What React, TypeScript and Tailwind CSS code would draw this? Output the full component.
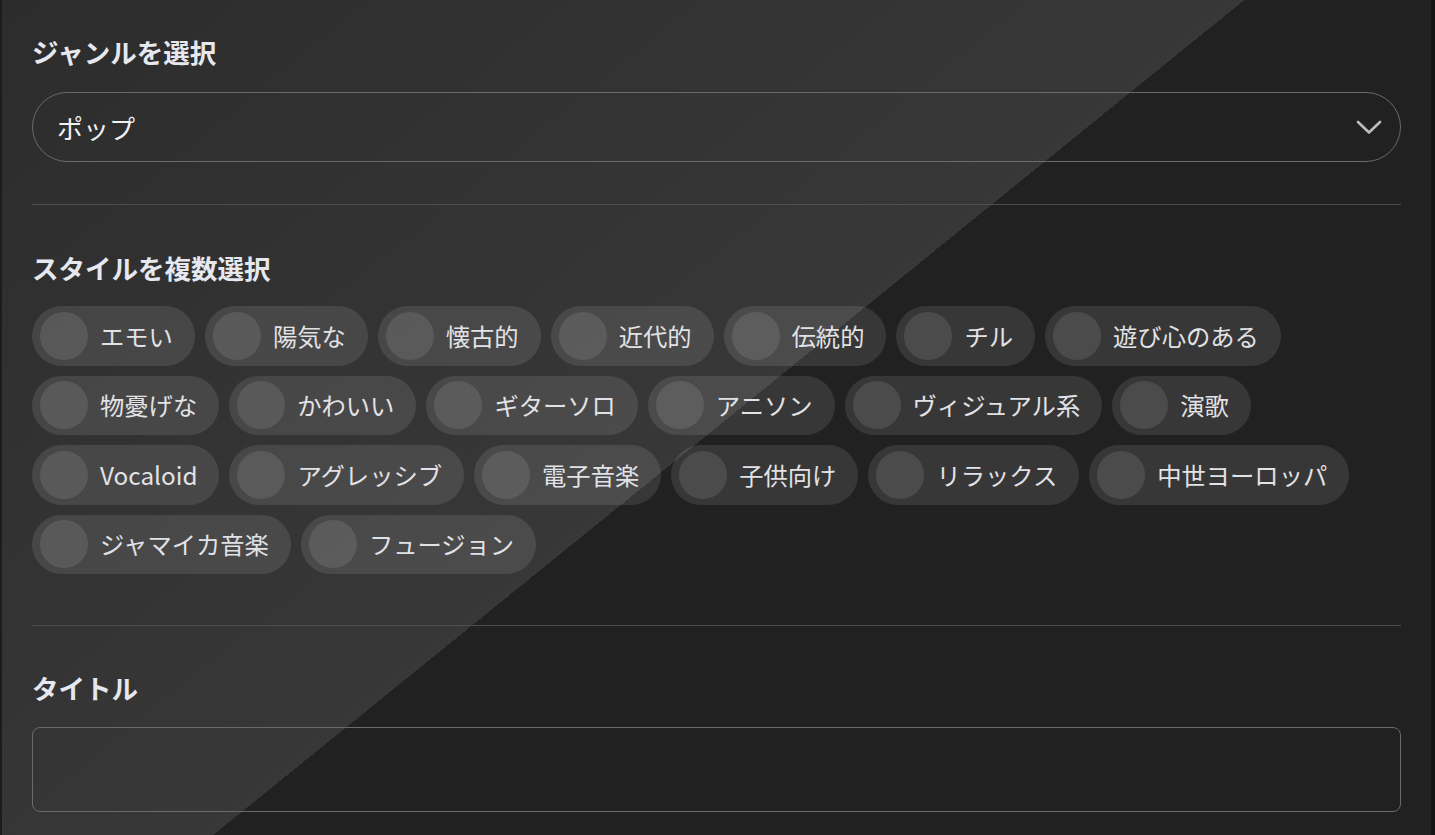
const styles = [
  ["エモい", "陽気な", "懐古的", "近代的", "伝統的", "チル", "遊び心のある"],
  ["物憂げな", "かわいい", "ギターソロ", "アニソン", "ヴィジュアル系", "演歌"],
  ["Vocaloid", "アグレッシブ", "電子音楽", "子供向け", "リラックス", "中世ヨーロッパ"],
  ["ジャマイカ音楽", "フュージョン"],
];

const SectionTitle = ({ children, className = "" }: { children: React.ReactNode; className?: string }) => (
  <h2 className={`text-[26.5px] leading-[40px] font-bold text-[#e6e8ef] ${className}`}>{children}</h2>
);

const StyleChip = ({ label }: { label: string }) => (
  <button className="flex items-center gap-3 h-[59.5px] pl-2 pr-[22px] rounded-full bg-white/10">
    <span className="w-12 h-12 rounded-full bg-white/10 shrink-0" />
    <span className="text-[24.3px] text-[#e2e2e6] whitespace-nowrap">{label}</span>
  </button>
);

export default function App() {
  return (
    <div
      className="h-[835px] w-full overflow-hidden flex bg-[#212121]"
      style={{ fontFamily: '"Noto Sans CJK JP", "Noto Sans", sans-serif' }}
    >
      <div className="w-[2px] shrink-0 bg-[#1b1d1b]" />
      <div className="flex-1 px-[30px] pt-8 bg-[linear-gradient(141deg,rgba(255,255,255,0.05)_0%,rgba(255,255,255,0.1)_50.5%,rgba(255,255,255,0)_50.5%)]">
        <SectionTitle className="mb-5">ジャンルを選択</SectionTitle>
        <div className="h-[70px] rounded-full border border-[#6a6a6a] flex items-center justify-between pl-6 pr-[18px]">
          <span className="text-[26px] text-[#f2f2f5]">ポップ</span>
          <svg width="26" height="15" viewBox="0 0 26 15" fill="none">
            <polyline points="2,2 13,12.5 24,2" stroke="#bdbdbd" strokeWidth="2.6" strokeLinecap="round" strokeLinejoin="round" />
          </svg>
        </div>

        <div className="mt-[42px] h-px bg-[#4d4d4d]" />

        <SectionTitle className="mt-[43px] mb-[18px]">スタイルを複数選択</SectionTitle>
        <div className="flex flex-col gap-y-[10px]">
          {styles.map((row, i) => (
            <div key={i} className="flex gap-[10px]">
              {row.map((s) => (
                <StyleChip key={s} label={s} />
              ))}
            </div>
          ))}
        </div>

        <div className="mt-[51px] h-px bg-[#4d4d4d]" />

        <SectionTitle className="mt-[42px] mb-[19px]">タイトル</SectionTitle>
        <div className="h-[85px] rounded-lg border border-[#6a6a6a]" />
      </div>
      <div className="w-[4px] shrink-0 bg-[#141414]" />
    </div>
  );
}
